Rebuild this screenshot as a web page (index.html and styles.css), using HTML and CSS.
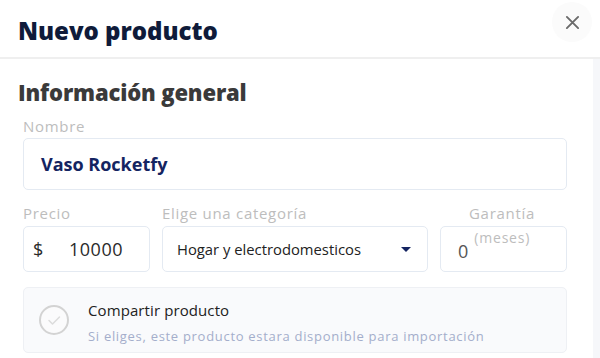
FILE: index.html
```html
<!DOCTYPE html>
<html lang="es">
<head>
<meta charset="utf-8">
<link rel="stylesheet" href="styles.css">
</head>
<body>
<div class="modal">
  <header class="head">
    <h1 class="title">Nuevo producto</h1>
    <button class="close" aria-label="Cerrar">
      <svg width="16" height="16" viewBox="0 0 16 16"><path d="M2 2 L14 14 M14 2 L2 14" stroke="#6b6b6b" stroke-width="2" stroke-linecap="round" fill="none"/></svg>
    </button>
  </header>
  <div class="body">
    <main class="content">
      <h2 class="section">Información general</h2>
      <div class="fields">
        <div class="lbl">Nombre</div>
        <div class="input name">Vaso Rocketfy</div>
        <div class="row">
          <div class="col price">
            <div class="lbl">Precio</div>
            <div class="input small"><span class="cur">$</span><span class="amount">10000</span></div>
          </div>
          <div class="col cat">
            <div class="lbl">Elige una categoría</div>
            <div class="input small select"><span class="opt">Hogar y electrodomesticos</span><span class="caret"></span></div>
          </div>
          <div class="col war">
            <div class="lbl right">Garantía</div>
            <div class="input small warranty"><span class="zero">0</span><span class="unit">(meses)</span></div>
          </div>
        </div>
        <div class="share">
          <div class="check">
            <svg width="30" height="30" viewBox="0 0 30 30"><circle cx="15" cy="15" r="14" fill="#fbfbfc" stroke="#d3d3d3" stroke-width="2"/><path d="M10 15.5 L13.5 19 L20.5 12" stroke="#dcdcdc" stroke-width="1.5" fill="none" stroke-linecap="round" stroke-linejoin="round"/></svg>
          </div>
          <div class="share-text">
            <div class="share-title">Compartir producto</div>
            <div class="share-desc">Si eliges, este producto estara disponible para importación</div>
          </div>
        </div>
      </div>
    </main>
    <div class="scroll"></div>
  </div>
</div>
</body>
</html>
```
FILE: styles.css
```css
* { box-sizing: border-box; }
html, body { margin: 0; padding: 0; background: #fff; }
body { font-family: "Open Sans", "Noto Sans", sans-serif; width: 600px; height: 358px; overflow: hidden; }

.modal { display: flex; flex-direction: column; height: 358px; }

.head {
  height: 59px;
  display: flex;
  align-items: flex-start;
  justify-content: space-between;
  border-bottom: 2px solid #efefef;
  padding: 0 8px 0 18px;
}
.title {
  margin: 15px 0 0;
  font-size: 24px;
  line-height: 32px;
  font-weight: 800;
  color: #0f1b3a;
  letter-spacing: 0;
}
.close {
  margin-top: 2px;
  width: 40px;
  height: 40px;
  border-radius: 50%;
  border: none;
  background: #fbfbfb;
  display: flex;
  align-items: center;
  justify-content: center;
  padding: 0;
}
.close svg { width: 15px; height: 15px; }

.body { flex: 1; display: flex; }
.content { flex: 1; padding: 0 26px 0 18px; }
.scroll { width: 7px; background: #f6f7fa; }

.section {
  margin: 18px 0 0;
  font-size: 22px;
  line-height: 30px;
  font-weight: 800;
  color: #3a3a3a;
  letter-spacing: -0.15px;
}

.fields { padding-left: 5px; margin-top: 9px; }

.lbl {
  font-size: 15px;
  line-height: 20px;
  color: #bdbdbd;
  letter-spacing: 0.7px;
}
.lbl.right { text-align: right; padding-right: 32px; }

.input {
  border: 1px solid #e4eaf2;
  border-radius: 5px;
  background: #fff;
  display: flex;
  align-items: center;
}
.name {
  margin-top: 2px;
  height: 52px;
  padding-left: 17px;
  font-size: 18px;
  font-weight: 700;
  color: #142461;
}

.row { display: flex; gap: 12px; margin-top: 13px; }
.row .input { margin-top: 3px; }
.small { height: 46px; }
.price { width: 127px; }
.cat { flex: 1; }
.war { width: 127px; }

.cur { font-size: 18px; color: #2a2a2a; padding-left: 9px; width: 45px; }
.amount { font-size: 18px; color: #2a2a2a; letter-spacing: 0.5px; }

.select { justify-content: space-between; padding: 0 16px 0 14px; }
.opt { font-size: 14.8px; color: #222; }
.caret {
  width: 0; height: 0;
  border-left: 5px solid transparent;
  border-right: 5px solid transparent;
  border-top: 5px solid #142461;
}

.warranty { align-items: flex-start; padding-left: 17px; }
.zero { font-size: 18px; color: #555; margin-top: 12px; }
.unit { font-size: 14px; color: #bdbdbd; margin-left: 6px; margin-top: 1px; letter-spacing: 0.8px; }

.share {
  margin-top: 15px;
  height: 66px;
  border: 1px solid #eef0f4;
  border-radius: 5px;
  background: #f9fafc;
  display: flex;
  align-items: center;
  padding-left: 15px;
}
.check { width: 30px; height: 30px; margin-right: 19px; }
.share-text { padding-top: 4px; }
.share-title { font-size: 15px; color: #222; line-height: 20px; letter-spacing: 0.1px; }
.share-desc { font-size: 13px; color: #a4aecb; line-height: 18px; margin-top: 7px; letter-spacing: 0.7px; }
```
